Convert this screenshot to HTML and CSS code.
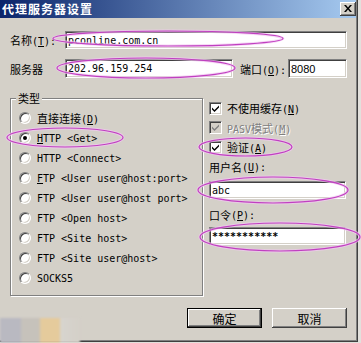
FILE: index.html
```html
<!DOCTYPE html>
<html lang="zh-CN">
<head>
<meta charset="utf-8">
<title>代理服务器设置</title>
<link rel="stylesheet" href="styles.css">
</head>
<body>
<div class="window">
  <div class="titlebar">
    <span class="title">代理服务器设置</span>
    <span class="close"><svg width="8" height="7" viewBox="0 0 8 7"><path d="M0 0h2l2 2.5L6 0h2L5 3.5 8 7H6L4 4.5 2 7H0l3-3.5z" fill="#000"/></svg></span>
  </div>
  <div class="content">
    <div class="row r1">
      <span class="lbl">名称<span class="m">(<u>T</u>):</span></span>
      <div class="field name"><span class="m">pconline.com.cn</span></div>
    </div>
    <div class="row r2">
      <span class="lbl">服务器</span>
      <div class="field server"><span class="m">202.96.159.254</span></div>
      <span class="lbl port-lbl">端口<span class="m">(<u>O</u>):</span></span>
      <div class="field port">8080</div>
    </div>
    <div class="main">
      <div class="group">
        <span class="legend">类型</span>
        <div class="radios">
          <div class="radio"><span class="rb"></span><span>直接连接<span class="m">(<u>D</u>)</span></span></div>
          <div class="radio"><span class="rb on"></span><span class="m"><u>H</u>TTP &lt;Get&gt;</span></div>
          <div class="radio"><span class="rb"></span><span class="m">HTTP &lt;Connect&gt;</span></div>
          <div class="radio"><span class="rb"></span><span class="m"><u>F</u>TP &lt;User user@host:port&gt;</span></div>
          <div class="radio"><span class="rb"></span><span class="m">FTP &lt;User user@host port&gt;</span></div>
          <div class="radio"><span class="rb"></span><span class="m">FTP &lt;Open host&gt;</span></div>
          <div class="radio"><span class="rb"></span><span class="m">FTP &lt;Site host&gt;</span></div>
          <div class="radio"><span class="rb"></span><span class="m">FTP &lt;Site user@host&gt;</span></div>
          <div class="radio"><span class="rb"></span><span class="m">SOCKS5</span></div>
        </div>
      </div>
      <div class="right">
        <div class="check c1"><span class="cb"><svg width="9" height="9" viewBox="0 0 9 9"><path d="M1 3.5l2.5 2.5L8 1.5v2L3.5 8 1 5.5z" fill="#000"/></svg></span><span>不使用缓存<span class="m">(<u>N</u>)</span></span></div>
        <div class="check c2 disabled"><span class="cb"><svg width="9" height="9" viewBox="0 0 9 9"><path d="M1 3.5l2.5 2.5L8 1.5v2L3.5 8 1 5.5z" fill="#808080"/></svg></span><span><span class="m">PASV</span>模式<span class="m">(<u>M</u>)</span></span></div>
        <div class="check c3"><span class="cb"><svg width="9" height="9" viewBox="0 0 9 9"><path d="M1 3.5l2.5 2.5L8 1.5v2L3.5 8 1 5.5z" fill="#000"/></svg></span><span>验证<span class="m">(<u>A</u>)</span></span></div>
        <div class="flbl user-lbl">用户名<span class="m">(<u>U</u>):</span></div>
        <div class="field user"><span class="m">abc</span></div>
        <div class="flbl pass-lbl">口令<span class="m">(<u>P</u>):</span></div>
        <div class="field pass"><span class="m stars">***********</span></div>
      </div>
    </div>
    <div class="buttons">
      <button class="btn default">确定</button>
      <button class="btn">取消</button>
    </div>
  </div>
</div>
<div class="smudge"></div>
<svg class="annot" width="361" height="343" viewBox="0 0 361 343">
  <g fill="none" stroke="#f3c8f3" stroke-width="3" opacity="0.7">
    <ellipse cx="168" cy="38.5" rx="115" ry="7.5"/>
    <ellipse cx="146" cy="68" rx="89" ry="10"/>
    <ellipse cx="65" cy="137.5" rx="58" ry="9.5"/>
    <ellipse cx="245.5" cy="147" rx="46.5" ry="9"/>
    <ellipse cx="273" cy="190" rx="75" ry="13"/>
    <ellipse cx="280" cy="237" rx="80" ry="14"/>
  </g>
  <g fill="none" stroke="#c040c0" stroke-width="1.2">
    <ellipse cx="168" cy="38.5" rx="115" ry="7.5"/>
    <ellipse cx="146" cy="68" rx="89" ry="10"/>
    <ellipse cx="65" cy="137.5" rx="58" ry="9.5"/>
    <ellipse cx="245.5" cy="147" rx="46.5" ry="9"/>
    <ellipse cx="273" cy="190" rx="75" ry="13"/>
    <ellipse cx="280" cy="237" rx="80" ry="14"/>
  </g>
</svg>
</body>
</html>
```

FILE: styles.css
```css
* { box-sizing: border-box; }
html, body { margin: 0; padding: 0; }
body {
  width: 361px;
  height: 343px;
  overflow: hidden;
  position: relative;
  background: #e2e0dc;
  font: 11px "Noto Sans CJK SC", sans-serif;
  color: #000;
}
u { text-decoration: underline; text-underline-offset: 1px; }
.m { font: 10px "DejaVu Sans Mono", "Noto Sans CJK SC", monospace; }

.window {
  width: 358px;
  height: 342px;
  background: #d4d0c8;
  box-shadow: inset -1px -1px #404040, inset -2px -2px #808080;
  display: flex;
  flex-direction: column;
}
.titlebar {
  height: 18px;
  margin-right: 2px;
  background: linear-gradient(to right, #0a246a, #a6caf0);
  display: flex;
  align-items: center;
  justify-content: space-between;
  padding: 0 0 0 2px;
}
.title {
  color: #fff;
  font-weight: bold;
  font-size: 12px;
  letter-spacing: 1px;
  line-height: 18px;
}
.close {
  width: 16px;
  height: 14px;
  background: #d4d0c8;
  box-shadow: inset -1px -1px #404040, inset 1px 1px #fff, inset -2px -2px #808080;
  display: flex;
  align-items: center;
  justify-content: center;
  padding-bottom: 1px;
}
.content {
  flex: 1;
  padding: 13px 11px 0 10px;
  display: flex;
  flex-direction: column;
}
.row { display: flex; align-items: center; height: 18px; }
.r2 { margin-top: 10px; height: 19px; }
.lbl { width: 55px; white-space: nowrap; }
.field {
  height: 100%;
  background: #fff;
  border: 1px solid;
  border-color: #808080 #fff #fff #808080;
  box-shadow: inset 1px 1px #404040, inset -1px -1px #d4d0c8;
  padding: 0 2px;
  display: flex;
  align-items: center;
  white-space: nowrap;
}
.name { flex: 1; }
.server { width: 168px; }
.port-lbl { margin-left: 7px; width: 48px; }
.port { width: 59px; font: 11px "Liberation Sans", sans-serif; }

.main { display: flex; margin-top: 20px; gap: 6px; }
.group {
  width: 193px;
  height: 198px;
  border: 1px solid #808080;
  box-shadow: inset 1px 1px #fff, 1px 1px #fff;
}
.legend {
  display: block;
  width: fit-content;
  height: 14px;
  line-height: 14px;
  margin: -8px 0 0 5px;
  padding: 0 2px;
  background: #d4d0c8;
}
.radios { margin-top: 3px; }
.radio {
  height: 20px;
  display: flex;
  align-items: center;
  gap: 6px;
  padding-left: 8px;
  white-space: nowrap;
}
.rb {
  width: 12px;
  height: 12px;
  border-radius: 50%;
  background: #fff;
  border: 1px solid;
  border-color: #808080 #fff #fff #808080;
  box-shadow: inset 1px 1px #404040, inset -1px -1px #d4d0c8;
  position: relative;
  flex: none;
}
.rb.on::after {
  content: "";
  position: absolute;
  left: 3px;
  top: 3px;
  width: 4px;
  height: 4px;
  border-radius: 50%;
  background: #000;
}
.right { width: 138px; display: flex; flex-direction: column; }
.check {
  display: flex;
  align-items: center;
  gap: 5px;
  height: 20px;
  white-space: nowrap;
}
.c2 { height: 19px; }
.cb {
  width: 13px;
  height: 13px;
  background: #fff;
  border: 1px solid;
  border-color: #808080 #fff #fff #808080;
  box-shadow: inset 1px 1px #404040, inset -1px -1px #d4d0c8;
  display: flex;
  align-items: center;
  justify-content: center;
  flex: none;
}
.disabled .cb { background: #d4d0c8; }
.disabled > span:last-child { color: #808080; text-shadow: 1px 1px #fff; }
.flbl { height: 20px; display: flex; align-items: center; white-space: nowrap; }
.pass-lbl { height: 18px; margin-top: 7px; }
.user { height: 18px; margin-top: 4px; width: 137px; }
.pass { height: 18px; margin-top: 3px; width: 137px; }
.stars { font-weight: bold; letter-spacing: 0; }

.buttons {
  display: flex;
  justify-content: flex-end;
  gap: 10px;
  margin-top: 12px;
}
.btn {
  width: 75px;
  height: 20px;
  margin: 0;
  padding: 0;
  background: #d4d0c8;
  border: none;
  font: 12px "Noto Sans CJK SC", sans-serif;
  color: #000;
  box-shadow: inset -1px -1px #404040, inset 1px 1px #fff, inset -2px -2px #808080;
}
.btn.default {
  border: 1px solid #000;
}
.smudge {
  position: absolute;
  left: 0;
  top: 318px;
  width: 80px;
  height: 25px;
  background: linear-gradient(to right, #b9b9c1 0, #b9b9c1 20px, #c6c2bb 22px, #c6c2bb 39px, #e5cb9c 41px, #e5cb9c 59px, #d7d4ce 61px, #d4d0c8 80px);
  filter: blur(1px);
}
.annot { position: absolute; left: 0; top: 0; pointer-events: none; }
```
